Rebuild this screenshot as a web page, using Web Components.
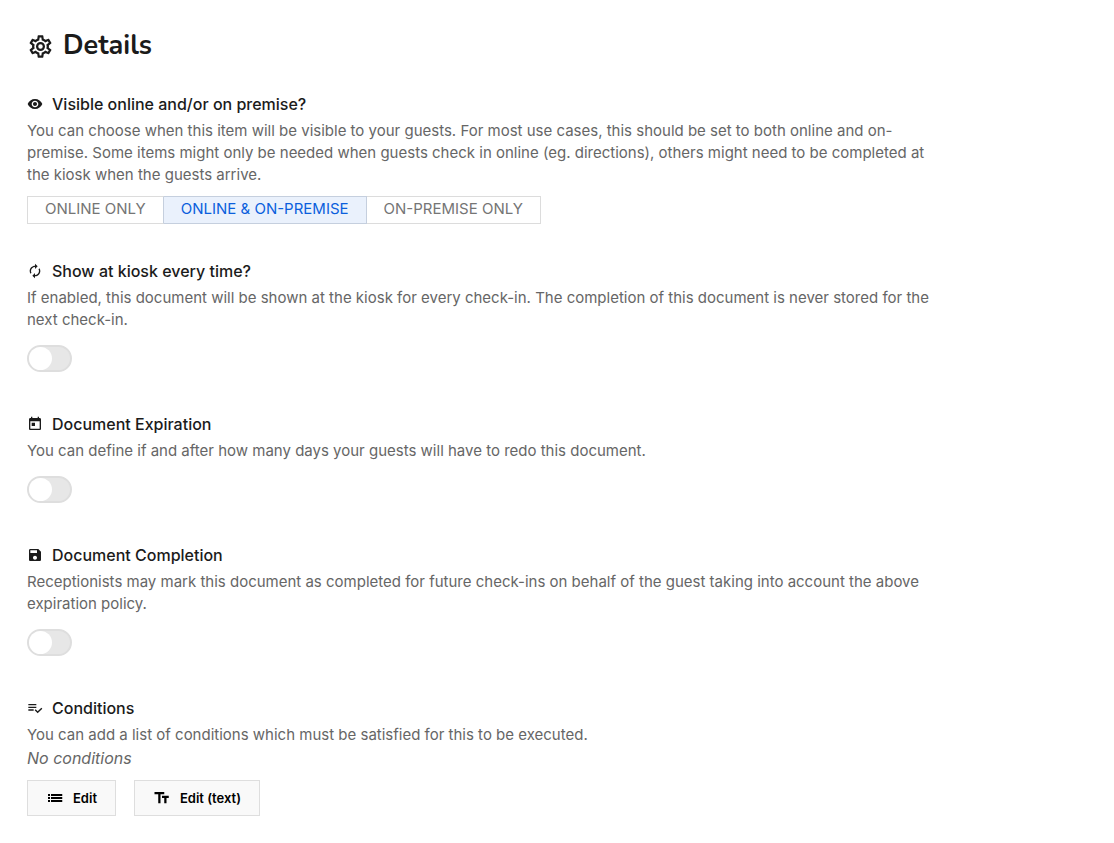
<!DOCTYPE html>
<html lang="en">
<head>
<meta charset="utf-8">
<meta name="viewport" content="width=device-width, initial-scale=1">
<title>Details</title>
<style>
  body {
    margin: 0;
    background: #fff;
    color: #1b1b1b;
    font-family: Inter, "Liberation Sans", sans-serif;
    font-size: 15px;
    line-height: 22px;
  }
</style>
</head>
<body>
<item-details></item-details>

<script>
// 24x24 icon shapes
const icons = {
  cog: "M12,8A4,4 0 0,1 16,12A4,4 0 0,1 12,16A4,4 0 0,1 8,12A4,4 0 0,1 12,8M12,10A2,2 0 0,0 10,12A2,2 0 0,0 12,14A2,2 0 0,0 14,12A2,2 0 0,0 12,10M10,22C9.75,22 9.54,21.82 9.5,21.58L9.13,18.93C8.5,18.68 7.96,18.34 7.44,17.94L4.95,18.95C4.73,19.03 4.46,18.95 4.34,18.73L2.34,15.27C2.21,15.05 2.27,14.78 2.46,14.63L4.57,12.97L4.5,12L4.57,11L2.46,9.37C2.27,9.22 2.21,8.95 2.34,8.73L4.34,5.27C4.46,5.05 4.73,4.96 4.95,5.05L7.44,6.05C7.96,5.66 8.5,5.32 9.13,5.07L9.5,2.42C9.54,2.18 9.75,2 10,2H14C14.25,2 14.46,2.18 14.5,2.42L14.87,5.07C15.5,5.32 16.04,5.66 16.56,6.05L19.05,5.05C19.27,4.96 19.54,5.05 19.66,5.27L21.66,8.73C21.79,8.95 21.73,9.22 21.54,9.37L19.43,11L19.5,12L19.43,13L21.54,14.63C21.73,14.78 21.79,15.05 21.66,15.27L19.66,18.73C19.54,18.95 19.27,19.04 19.05,18.95L16.56,17.95C16.04,18.34 15.5,18.68 14.87,18.93L14.5,21.58C14.46,21.82 14.25,22 14,22H10M11.25,4L10.88,6.61C9.68,6.86 8.62,7.5 7.85,8.39L5.44,7.35L4.69,8.65L6.8,10.2C6.4,11.37 6.4,12.64 6.8,13.8L4.68,15.36L5.43,16.66L7.86,15.62C8.63,16.5 9.68,17.14 10.87,17.38L11.24,20H12.76L13.13,17.39C14.32,17.14 15.37,16.5 16.14,15.62L18.57,16.66L19.32,15.36L17.2,13.81C17.6,12.64 17.6,11.37 17.2,10.2L19.31,8.65L18.56,7.35L16.15,8.39C15.38,7.5 14.32,6.86 13.12,6.62L12.75,4H11.25Z",
  eye: "M12 4.5C7 4.5 2.73 7.61 1 12c1.73 4.39 6 7.5 11 7.5s9.27-3.11 11-7.5c-1.73-4.39-6-7.5-11-7.5zM12 17c-2.76 0-5-2.24-5-5s2.24-5 5-5 5 2.24 5 5-2.24 5-5 5zm0-8c-1.66 0-3 1.34-3 3s1.34 3 3 3 3-1.34 3-3-1.34-3-3-3z",
  repeat: "M12 6v3l4-4-4-4v3c-4.42 0-8 3.58-8 8 0 1.57.46 3.03 1.24 4.26L6.7 14.8c-.45-.83-.7-1.79-.7-2.8 0-3.31 2.69-6 6-6zm6.76 1.74L17.3 9.2c.44.84.7 1.79.7 2.8 0 3.31-2.69 6-6 6v-3l-4 4 4 4v-3c4.42 0 8-3.58 8-8 0-1.57-.46-3.03-1.24-4.26z",
  calendar: "M19 3h-1V1h-2v2H8V1H6v2H5c-1.11 0-1.99.9-1.99 2L3 19c0 1.1.89 2 2 2h14c1.1 0 2-.9 2-2V5c0-1.1-.9-2-2-2zm0 16H5V8h14v11zM7 10h5v5H7z",
  save: "M17 3H5c-1.11 0-2 .9-2 2v14c0 1.1.89 2 2 2h14c1.1 0 2-.9 2-2V7l-4-4zm-5 16c-1.66 0-3-1.34-3-3s1.34-3 3-3 3 1.34 3 3-1.34 3-3 3zm3-10H5V5h10v4z",
  check: "M14 10H2v2h12v-2zm0-4H2v2h12V6zM2 16h8v-2H2v2zm19.5-4.5L23 13l-6.99 7-4.51-4.5L13 14l3.01 3 5.49-5.5z",
  list: "M2.67 6.67h2.66v2.66H2.67zM2.67 10.67h2.66v2.66H2.67zM2.67 14.67h2.66v2.66H2.67zM6.67 6.67h15v2.66h-15zM6.67 10.67h15v2.66h-15zM6.67 14.67h15v2.66h-15z",
  text: "M2 4v3h5v12h3V7h5V4H2zm19 5h-9v3h3v7h3v-7h3V9z",
};

class DetailIcon extends HTMLElement {
  constructor() {
    super();
    this.attachShadow({ mode: "open" });
    this.shadowRoot.innerHTML = `<style>
      :host { display: inline-block; width: 16px; height: 16px; flex: none; }
      svg { display: block; width: 100%; height: 100%; fill: currentColor; }
    </style><svg viewBox="0 0 24 24" aria-hidden="true"><path d="${icons[this.getAttribute("name")]}"/></svg>`;
  }
}

class DetailSection extends HTMLElement {
  constructor() {
    super();
    this.attachShadow({ mode: "open" });
    this.shadowRoot.innerHTML = `<style>
      :host { display: block; }
      h2 { display: flex; align-items: center; gap: 9px; margin: 0 0 5px; font-size: 16px; font-weight: 500; }
      p { margin: 0; font-size: 15px; color: #666; }
    </style>
    <h2><detail-icon name="${this.getAttribute("icon")}"></detail-icon><slot name="title"></slot></h2>
    <p><slot name="description"></slot></p>
    <slot></slot>`;
  }
}

class SegmentedControl extends HTMLElement {
  constructor() {
    super();
    this.attachShadow({ mode: "open" });
    const selected = Number(this.getAttribute("selected"));
    const options = this.getAttribute("options").split("|");
    const choices = options
      .map(
        (text, i) =>
          `<label><input type="radio" name="choice" value="${i}"${i === selected ? " checked" : ""}>${text}</label>`,
      )
      .join("");
    this.shadowRoot.innerHTML = `<style>
      :host { display: block; margin-top: 10px; }
      fieldset { display: flex; flex-wrap: wrap; margin: 0; padding: 0; border: 0; min-width: 0; }
      label { box-sizing: border-box; height: 28px; padding: 1px 17px; border: 1px solid #dcdcdc; font-size: 15px; color: #757575; cursor: pointer; }
      label + label { border-left: 0; }
      label:has(:checked) { background: #eaf1fc; color: #0b5fdc; border-color: #c5cfde; }
      label:has(+ label :checked) { border-right-color: #c5cfde; }
      label:has(:focus-visible) { outline: 2px solid #0b5fdc; }
      input { appearance: none; position: absolute; margin: 0; }
    </style><fieldset aria-label="${this.getAttribute("label")}">${choices}</fieldset>`;
  }
}

class ToggleSwitch extends HTMLElement {
  constructor() {
    super();
    this.attachShadow({ mode: "open" });
    this.shadowRoot.innerHTML = `<style>
      :host { display: block; margin: 14px 0 5px; }
      input { appearance: none; display: flex; box-sizing: border-box; width: 45px; height: 27px; margin: 0; border: 2px solid #dedede; border-radius: 14px; background: #e7e7e7; cursor: pointer; }
      input::before { content: ""; width: 23px; height: 23px; border-radius: 50%; background: #fff; }
      input:checked { justify-content: flex-end; background: #0b5fdc; border-color: #0b5fdc; }
    </style><input type="checkbox" role="switch" aria-label="${this.getAttribute("label")}">`;
  }
}

class IconButton extends HTMLElement {
  constructor() {
    super();
    this.attachShadow({ mode: "open" });
    this.shadowRoot.innerHTML = `<style>
      :host { display: block; }
      button { display: flex; align-items: center; gap: 9px; box-sizing: border-box; height: 36px; margin: 0; padding: 0 18px; border: 1px solid #dedede; background: #f9f9f9; color: #000; font: inherit; font-size: 13px; font-weight: 600; cursor: pointer; }
      button:hover { background: #f0f0f0; }
      detail-icon { width: 18px; height: 18px; }
    </style><button type="button"><detail-icon name="${this.getAttribute("icon")}"></detail-icon><slot></slot></button>`;
  }
}

class ItemDetails extends HTMLElement {
  constructor() {
    super();
    this.attachShadow({ mode: "open" });
    this.shadowRoot.innerHTML = `<style>
      :host { display: block; padding: 28px 27px 27px; }
      main { display: flex; flex-direction: column; gap: 36px; max-width: 912px; }
      h1 { display: flex; align-items: center; gap: 9px; margin: 0 0 -7px; font: 700 27px/36px Nunito, Lato, sans-serif; }
      h1 detail-icon { width: 27px; height: 27px; }
      .empty { margin: 1px 0 11px; color: #666; font-size: 16px; font-style: italic; }
      .actions { display: flex; flex-wrap: wrap; gap: 18px; }
    </style>
    <main>
      <h1><detail-icon name="cog"></detail-icon>Details</h1>
      <detail-section icon="eye">
        <span slot="title">Visible online and/or on premise?</span>
        <span slot="description">You can choose when this item will be visible to your guests. For most use cases, this should be set to both online and on-premise. Some items might only be needed when guests check in online (eg. directions), others might need to be completed at<br>the kiosk when the guests arrive.</span>
        <segmented-control label="Visible online and/or on premise?" selected="1" options="ONLINE ONLY|ONLINE &amp;amp; ON-PREMISE|ON-PREMISE ONLY"></segmented-control>
      </detail-section>
      <detail-section icon="repeat">
        <span slot="title">Show at kiosk every time?</span>
        <span slot="description">If enabled, this document will be shown at the kiosk for every check-in. The completion of this document is never stored for the next check-in.</span>
        <toggle-switch label="Show at kiosk every time?"></toggle-switch>
      </detail-section>
      <detail-section icon="calendar">
        <span slot="title">Document Expiration</span>
        <span slot="description">You can define if and after how many days your guests will have to redo this document.</span>
        <toggle-switch label="Document Expiration"></toggle-switch>
      </detail-section>
      <detail-section icon="save">
        <span slot="title">Document Completion</span>
        <span slot="description">Receptionists may mark this document as completed for future check-ins on behalf of the guest taking into account the above expiration policy.</span>
        <toggle-switch label="Document Completion"></toggle-switch>
      </detail-section>
      <detail-section icon="check">
        <span slot="title">Conditions</span>
        <span slot="description">You can add a list of conditions which must be satisfied for this to be executed.</span>
        <div class="empty">No conditions</div>
        <div class="actions">
          <icon-button icon="list">Edit</icon-button>
          <icon-button icon="text">Edit (text)</icon-button>
        </div>
      </detail-section>
    </main>`;
  }
}

customElements.define("detail-icon", DetailIcon);
customElements.define("detail-section", DetailSection);
customElements.define("segmented-control", SegmentedControl);
customElements.define("toggle-switch", ToggleSwitch);
customElements.define("icon-button", IconButton);
customElements.define("item-details", ItemDetails);
</script>
</body>
</html>
